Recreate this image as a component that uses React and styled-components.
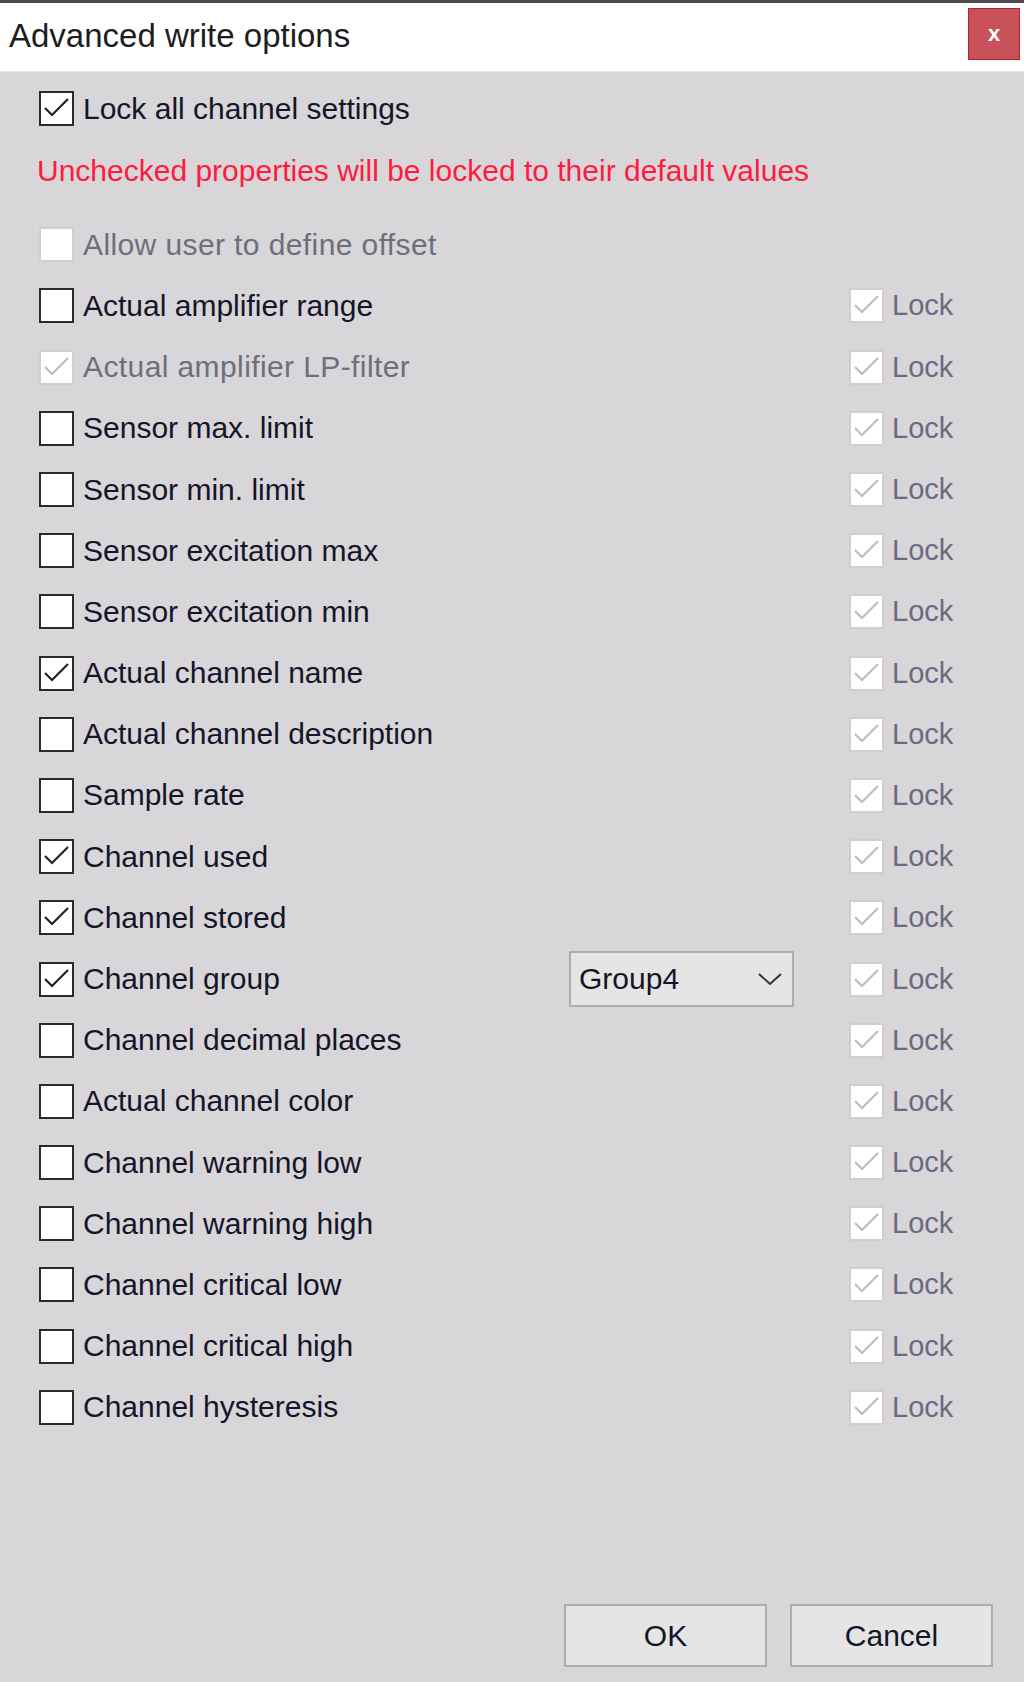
import React from 'react';
import styled, { createGlobalStyle } from 'styled-components';

const GlobalStyle = createGlobalStyle`
  html, body {
    margin: 0;
    padding: 0;
    background: #d8d6d9;
  }
  * { box-sizing: border-box; }
`

const Window = styled.div`
  width: 1024px;
  height: 1682px;
  display: flex;
  flex-direction: column;
  background: #d8d6d9;
  font-family: "Liberation Sans", Arial, sans-serif;
  overflow: hidden;
`

const TitleBar = styled.div`
  height: 72px;
  flex-shrink: 0;
  display: flex;
  align-items: center;
  justify-content: space-between;
  background: #ffffff;
  border-top: 3px solid #4a4a4a;
  border-bottom: 1px solid #e6e6e6;
  padding: 0 4px 0 9px;
`

const Title = styled.div`
  font-size: 33px;
  color: #1e1e1e;
  margin-top: -3px;
`

const CloseButton = styled.div`
  width: 52px;
  height: 52px;
  margin-top: -6px;
  background: #c9525a;
  border: 1px solid #b3232d;
  display: flex;
  align-items: center;
  justify-content: center;
  color: #ffffff;
  font-weight: bold;
  font-size: 22px;
`

const Body = styled.div`
  flex: 1;
  display: flex;
  flex-direction: column;
  padding: 6px 0 0 39px;
`

const Row = styled.div`
  height: 61.2px;
  display: grid;
  grid-template-columns: 530px 225px 55px auto;
  align-items: center;
`

const Option = styled.label`
  display: flex;
  align-items: center;
  gap: 9px;
  font-size: 30px;
  color: ${p => (p.disabled ? '#6e6e7c' : '#15152a')};
  letter-spacing: ${p => (p.disabled ? '0.4px' : '0')};
  white-space: nowrap;
`

const LockLabel = styled(Option)`
  gap: 8px;
  font-size: 29px;
  letter-spacing: 0;
  color: #6a6a82;
`

const Box = styled.span`
  width: 35px;
  height: 35px;
  flex-shrink: 0;
  background: #ffffff;
  border: ${p => (p.disabled ? '2px solid #cfcfd2' : '2px solid #2b2b2b')};
  display: flex;
  align-items: center;
  justify-content: center;
`

const Note = styled.div`
  height: 40px;
  margin: 12px 0 23px -2px;
  display: flex;
  align-items: center;
  font-size: 30px;
  color: #ff1b3d;
  white-space: nowrap;
`

const Select = styled.div`
  height: 56px;
  display: flex;
  align-items: center;
  justify-content: space-between;
  padding: 0 10px 0 8px;
  background: #e5e5e5;
  border: 2px solid #adadad;
  font-size: 30px;
  color: #15152a;
`

const Footer = styled.div`
  margin-top: auto;
  display: flex;
  justify-content: flex-end;
  gap: 23px;
  padding: 0 31px 15px 0;
`

const Button = styled.div`
  width: 203px;
  height: 63px;
  display: flex;
  align-items: center;
  justify-content: center;
  background: #e5e5e5;
  border: 2px solid #adadad;
  font-size: 30px;
  color: #15152a;
`

function CheckBox({ checked, disabled }) {
  return (
    <Box disabled={disabled}>
      {checked && (
        <svg width="31" height="31" viewBox="0 0 31 31">
          <polyline
            points="4,15 11,22 27,6"
            fill="none"
            stroke={disabled ? '#bdbdc0' : '#222'}
            strokeWidth="2.2"
          />
        </svg>
      )}
    </Box>
  )
}

const options = [
  { label: 'Actual amplifier range' },
  { label: 'Actual amplifier LP-filter', checked: true, disabled: true },
  { label: 'Sensor max. limit' },
  { label: 'Sensor min. limit' },
  { label: 'Sensor excitation max' },
  { label: 'Sensor excitation min' },
  { label: 'Actual channel name', checked: true },
  { label: 'Actual channel description' },
  { label: 'Sample rate' },
  { label: 'Channel used', checked: true },
  { label: 'Channel stored', checked: true },
  { label: 'Channel group', checked: true, select: 'Group4' },
  { label: 'Channel decimal places' },
  { label: 'Actual channel color' },
  { label: 'Channel warning low' },
  { label: 'Channel warning high' },
  { label: 'Channel critical low' },
  { label: 'Channel critical high' },
  { label: 'Channel hysteresis' },
]

export default function App() {
  return (
    <Window>
      <GlobalStyle />
      <TitleBar>
        <Title>Advanced write options</Title>
        <CloseButton>x</CloseButton>
      </TitleBar>
      <Body>
        <Row>
          <Option>
            <CheckBox checked />
            Lock all channel settings
          </Option>
        </Row>
        <Note>Unchecked properties will be locked to their default values</Note>
        <Row>
          <Option disabled>
            <CheckBox disabled />
            Allow user to define offset
          </Option>
        </Row>
        {options.map((o, i) => (
          <Row key={i}>
            <Option disabled={o.disabled}>
              <CheckBox checked={o.checked} disabled={o.disabled} />
              {o.label}
            </Option>
            {o.select ? (
              <Select>
                {o.select}
                <svg width="24" height="13" viewBox="0 0 24 13">
                  <polyline points="1,1 12,11 23,1" fill="none" stroke="#333" strokeWidth="2" />
                </svg>
              </Select>
            ) : (
              <span />
            )}
            <span />
            <LockLabel disabled>
              <CheckBox checked disabled />
              Lock
            </LockLabel>
          </Row>
        ))}
        <Footer>
          <Button>OK</Button>
          <Button>Cancel</Button>
        </Footer>
      </Body>
    </Window>
  )
}
